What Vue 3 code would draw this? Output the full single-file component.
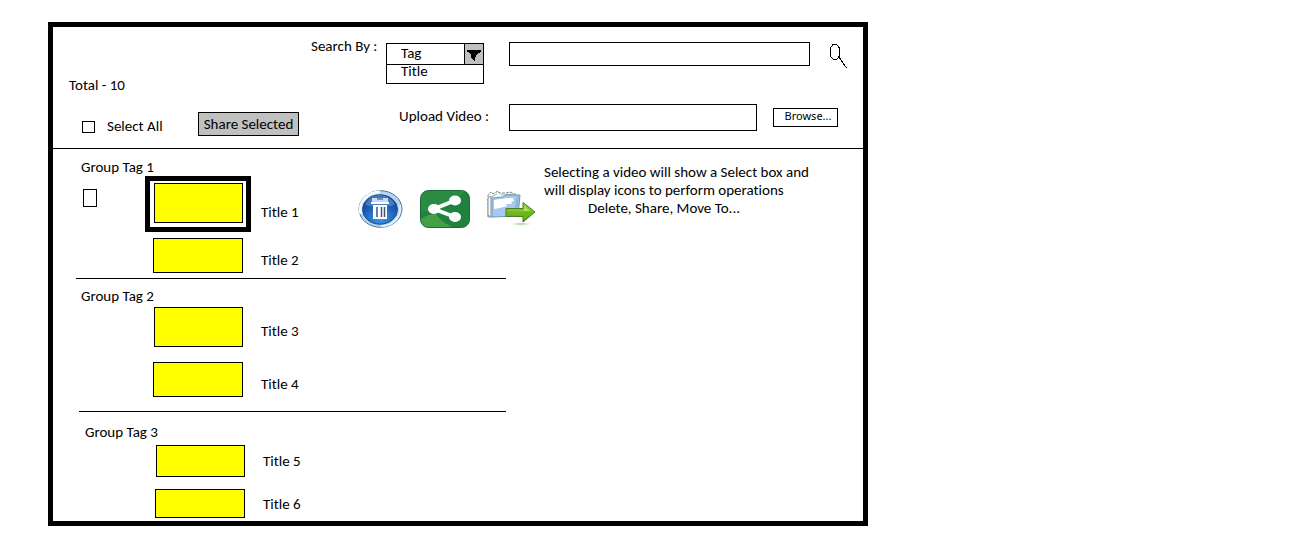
<script setup>
import { ref } from 'vue'

const searchBy = ref('Tag')
const query = ref('')
const file = ref('')

const groups = [
  {
    name: 'Group Tag 1',
    kind: 'first',
    videos: [
      { title: 'Title 1', size: 'tall', selected: true },
      { title: 'Title 2', size: 'medium' },
    ],
  },
  {
    name: 'Group Tag 2',
    kind: 'second',
    videos: [
      { title: 'Title 3', size: 'tall' },
      { title: 'Title 4', size: 'medium' },
    ],
  },
  {
    name: 'Group Tag 3',
    kind: 'third',
    videos: [
      { title: 'Title 5', size: 'short' },
      { title: 'Title 6', size: 'mini' },
    ],
  },
]
</script>

<template>
  <main class="frame">
    <header class="top">
      <div class="summary">
        <div class="total">Total - 10</div>
        <div class="bulk">
          <input id="all" type="checkbox" class="check" />
          <label for="all">Select All</label>
          <button type="button" class="share-btn">Share Selected</button>
        </div>
      </div>
      <form class="tools" @submit.prevent>
        <div class="tool-row search-row">
          <div class="lead">
            <label for="by" class="by-label">Search By :</label>
            <div class="combo">
              <select id="by" v-model="searchBy">
                <option>Tag</option>
                <option>Title</option>
              </select>
              <span class="combo-arrow">
                <svg width="18" height="20" viewBox="0 0 18 20">
                  <path d="M2 6H16V7L14 9H13L10 14V17H9L6 14V11L3 8H2Z" fill="#000" shape-rendering="crispEdges" />
                </svg>
              </span>
              <button type="button" class="combo-option" @click="searchBy = 'Title'">Title</button>
            </div>
          </div>
          <input v-model="query" class="field" type="text" aria-label="Search text" />
          <button type="submit" class="find" aria-label="Search">
            <svg width="19" height="26" viewBox="0 0 19 26" fill="none" stroke="#000" shape-rendering="crispEdges">
              <ellipse cx="6" cy="9" rx="5" ry="8" />
              <path d="M10 14L17.500 25" />
            </svg>
          </button>
        </div>
        <div class="tool-row upload-row">
          <label for="file" class="lead up-label">Upload Video :</label>
          <input id="file" v-model="file" class="field" type="text" />
          <button type="button" class="browse">Browse...</button>
        </div>
      </form>
    </header>

    <div class="body">
      <div class="groups">
        <section v-for="g in groups" :key="g.name" class="group" :class="g.kind">
          <h2 class="name">{{ g.name }}</h2>
          <div class="videos">
            <div v-for="v in g.videos" :key="v.title" class="video">
              <div class="pick">
                <input v-if="v.selected" type="checkbox" class="check large" :aria-label="'Select ' + v.title" />
              </div>
              <div class="holder" :class="{ selected: v.selected }">
                <div class="thumb" :class="v.size"></div>
              </div>
              <div class="title" :class="[v.size, { lowered: v.selected }]">{{ v.title }}</div>
              <div v-if="v.selected" class="actions">
                <button type="button" aria-label="Delete">
                  <svg width="45" height="38" viewBox="0 0 45 38">
                    <defs>
                      <radialGradient id="disc" cx="50%" cy="80%" r="75%">
                        <stop offset="0" stop-color="#3b9be8" />
                        <stop offset="0.55" stop-color="#1f66bd" />
                        <stop offset="1" stop-color="#123e86" />
                      </radialGradient>
                    </defs>
                    <ellipse cx="22.5" cy="19" rx="21.5" ry="18.3" fill="#b7d4f5" stroke="#4d7893" />
                    <path d="M3 24C0 12 9 2 22 2" fill="none" stroke="#f4faff" stroke-width="3" />
                    <path d="M42 15C44 27 35 36 23 36" fill="none" stroke="#e2eefb" stroke-width="2" />
                    <ellipse cx="22" cy="19.5" rx="17.5" ry="14.7" fill="url(#disc)" stroke="#244b83" />
                    <path d="M7 15C10 7 17 5 22 5S35 8 37 15Q22 19 7 15Z" fill="#5f91d4" opacity=".65" />
                    <path d="M14 8H30V12H14Z" fill="#c9dcf3" />
                    <path d="M19 8h6v2h-6z" fill="#7291bd" />
                    <path d="M13 12H31V14H13Z" fill="#fff" />
                    <path d="M15 15H29V29H15Z" fill="#fff" />
                    <path d="M19 17V27M23.500 17V27M26.500 17V27" stroke="#3a557e" stroke-width="1.500" />
                  </svg>
                </button>
                <button type="button" aria-label="Share">
                  <svg width="50" height="38" viewBox="0 0 50 38">
                    <rect x="0.5" y="0.5" width="49" height="37" rx="8" fill="#21813e" stroke="#176b36" />
                    <path d="M1 22C17 22 35 15 45 1H9Q1 1 1 9Z" fill="#2a8c42" />
                    <path d="M1 29Q8 24 16 24Q20 31 32 37H9Q1 37 1 29Z" fill="#43a047" />
                    <path d="M35 10.500L14 19L35 27" fill="none" stroke="#fff" stroke-width="4" />
                    <ellipse cx="35" cy="10.500" rx="6" ry="5" fill="#fff" />
                    <ellipse cx="14" cy="19" rx="6" ry="5" fill="#fff" />
                    <ellipse cx="35" cy="27" rx="6" ry="5" fill="#fff" />
                  </svg>
                </button>
                <button type="button" aria-label="Move To">
                  <svg width="49" height="38" viewBox="0 0 49 38">
                    <defs>
                      <linearGradient id="arrow" x1="0" x2="0" y1="0" y2="1">
                        <stop offset="0" stop-color="#9ad83c" />
                        <stop offset="1" stop-color="#4f9c10" />
                      </linearGradient>
                    </defs>
                    <ellipse cx="34" cy="34" rx="9" ry="1.500" fill="#e0eed8" />
                    <path d="M30 34H38" stroke="#a8c9a8" />
                    <path d="M1 27V5L4 2L6 4L11 1L12 3H19L23 2L30 5V10L6 27Z" fill="#fcfdfc" stroke="#71837f" stroke-dasharray="3 1" />
                    <path d="M4 7L10 4M14 5L28 4" stroke="#a1b3ae" />
                    <path d="M1 8L4 6V27L1 25Z" fill="#f4f8fa" stroke="#8798a0" />
                    <path d="M5 8L16 7L19 5H33L31 26L5 27Z" fill="#a6c9ef" stroke="#6d96b9" />
                    <path d="M7 10L20 8H26L27 11L24 12L25 14L19 14L20 16L13 18L7 19Z" fill="#fff" />
                    <path d="M30 6L32 6L30 19H28Z" fill="#80b9c9" />
                    <path d="M19 18.500H36V12.500L48 22L36 32V26.500H19Z" fill="url(#arrow)" stroke="#4b7d1e" />
                    <path d="M21 20.500H37V16L43 21Z" fill="#b1df60" />
                    <path d="M37 22L46 22L37 29Z" fill="#65bd09" />
                  </svg>
                </button>
              </div>
            </div>
          </div>
        </section>
      </div>
      <aside class="note">
        <p>Selecting a video will show a Select box and<br />will display icons to perform operations</p>
        <p class="indent">Delete, Share, Move To...</p>
      </aside>
    </div>
  </main>
</template>

<style>
body {
  background: #fff;
}
</style>

<style scoped>
.frame,
.frame * {
  box-sizing: border-box;
}
.frame {
  max-width: 820px;
  margin: 22px 48px 7px;
  border: 5px solid #000;
  background: #fff;
  color: #000;
  font: 15px/18px Carlito, Lato, 'Open Sans', sans-serif;
  font-variant-ligatures: none;
}
button,
select,
input {
  margin: 0;
  padding: 0;
  border: 1px solid #000;
  border-radius: 0;
  background: #fff;
  color: inherit;
  font: inherit;
}
svg {
  display: block;
}
.top {
  display: grid;
  grid-template-columns: 258px 1fr;
  border-bottom: 1px solid #000;
}
.summary {
  padding: 49px 0 12px 16px;
}
.total {
  margin-bottom: 18px;
}
.bulk {
  display: flex;
  align-items: center;
  padding-left: 13px;
}
.bulk label {
  padding-top: 3px;
}
.check {
  appearance: none;
  width: 13px;
  height: 12px;
  margin: 5px 12px 0 0;
}
.check.large {
  width: 14px;
  height: 18px;
  margin: 0;
}
.check:checked {
  background: #000;
  box-shadow: inset 0 0 0 2px #fff;
}
.share-btn {
  width: 101px;
  height: 24px;
  margin-left: auto;
  margin-right: 12px;
  background: #c0c0c0;
  white-space: nowrap;
}
.tools {
  padding: 15px 15px 0 0;
}
.tool-row {
  display: flex;
}
.search-row {
  height: 62px;
}
.lead {
  display: flex;
  flex: 0 0 198px;
  justify-content: space-between;
}
.by-label {
  margin-top: -5px;
}
.combo {
  position: relative;
  width: 98px;
  margin: 1px 25px 0 0;
}
.combo select {
  display: block;
  appearance: none;
  width: 100%;
  height: 22px;
  padding: 0 0 3px 14px;
}
.combo-arrow {
  position: absolute;
  top: 1px;
  right: 1px;
  height: 20px;
  border-left: 1px solid #000;
  background: #c0c0c0;
  pointer-events: none;
}
.combo-option {
  display: block;
  width: 100%;
  height: 20px;
  padding: 0 0 5px 14px;
  margin-top: -1px;
  line-height: 13px;
  text-align: left;
}
.field {
  flex: 1;
  min-width: 0;
  height: 24px;
  padding: 0 6px;
}
.find {
  margin: 1px 0 0 19px;
  border: 0;
  height: 26px;
}
.up-label {
  justify-content: flex-end;
  padding: 3px 20px 0 0;
}
.upload-row .field {
  height: 27px;
}
.browse {
  width: 65px;
  height: 19px;
  margin: 4px 10px 0 16px;
  padding: 0 0 3px 5px;
  font: 11px/14px 'Noto Sans', sans-serif;
}
.body {
  display: flex;
}
.groups {
  flex: 0 0 453px;
  min-width: 0;
  padding-left: 23px;
}
.group + .group {
  border-top: 1px solid #000;
}
.name {
  margin: 0 0 0 5px;
  font-size: inherit;
  font-weight: normal;
}
.videos {
  display: grid;
}
.first {
  padding: 9px 0 5px;
}
.first .videos {
  gap: 6px;
}
.second {
  padding: 8px 0 14px;
}
.second .videos {
  gap: 15px;
  padding-top: 2px;
}
.third {
  margin-left: 3px;
  padding: 11px 0 3px;
}
.third .name {
  margin-left: 6px;
}
.third .videos {
  gap: 12px;
  padding-top: 4px;
}
.video {
  display: grid;
  grid-template-columns: 69px 106px 107px 0;
  align-items: center;
}
.third .video {
  grid-template-columns: 68px 106px 107px 0;
}
.pick {
  display: flex;
  align-self: start;
  padding: 13px 0 0 7px;
}
.video:not(:first-child) .pick,
.second .pick,
.third .pick {
  padding: 0;
}
.holder {
  display: flex;
  justify-content: flex-end;
  padding-right: 8px;
}
.holder.selected {
  padding: 2px 3px 4px;
  border: 5px solid #000;
}
.thumb {
  width: 90px;
  border: 1px solid #000;
  background: #ff0;
}
.thumb.tall {
  width: 89px;
  height: 40px;
}
.thumb.medium {
  height: 35px;
}
.thumb.short {
  width: 89px;
  height: 32px;
}
.thumb.mini {
  height: 29px;
}
.title {
  padding: 8px 0 0 10px;
}
.title.lowered {
  padding-top: 16px;
}
.title.short,
.title.mini {
  padding-top: 0;
}
.actions {
  display: flex;
  gap: 17px;
  padding-top: 10px;
}
.actions button {
  flex: none;
  border: 0;
  background: none;
}
.note {
  flex: 1;
  padding: 14px 16px 0 38px;
}
.note p {
  margin: 0;
}
.note .indent {
  padding-left: 44px;
}
</style>
